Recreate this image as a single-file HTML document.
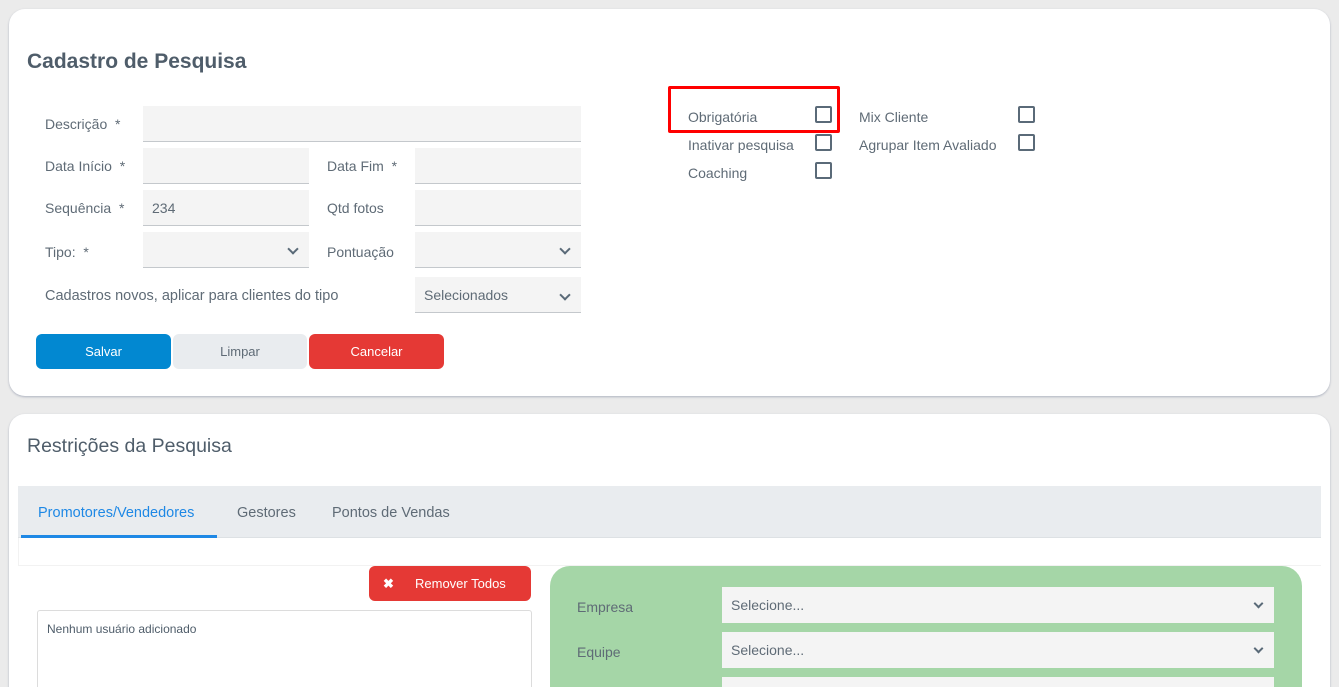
<!DOCTYPE html>
<html><head><meta charset="utf-8"><style>
*{box-sizing:border-box;margin:0;padding:0}
html{width:1339px;height:687px;overflow:hidden}
body{width:1339px;height:687px;overflow:hidden;background:#ebebeb;font-family:"Liberation Sans",sans-serif;color:#5f6b76;position:relative}
.a{position:absolute}
.card{position:absolute;background:#fff;border-radius:16px;box-shadow:0 1px 2px rgba(100,110,140,.45)}
.lbl{position:absolute;font-size:14px;color:#5f6b76}
.inp{position:absolute;background:#f4f4f4;border-bottom:1px solid #c4c8cc;height:36px}
.chev{position:absolute;width:8px;height:8px;border-right:2px solid #5a6a78;border-bottom:2px solid #5a6a78;transform:rotate(45deg)}
.cb{position:absolute;width:17px;height:17px;border:2px solid #5a6a78;border-radius:2px}
.btn{position:absolute;height:35px;border-radius:6px;font-size:13px;text-align:center;line-height:35px}
</style></head><body>
<div class="card" style="left:9px;top:9px;width:1321px;height:387px"></div>
<div class="a" style="left:27px;top:50px;font-size:21px;font-weight:bold;color:#4f5d6a">Cadastro de Pesquisa</div>

<div class="lbl" style="left:45px;top:116px">Descrição&nbsp;&nbsp;*</div>
<div class="inp" style="left:143px;top:106px;width:438px"></div>
<div class="lbl" style="left:45px;top:158px">Data Início&nbsp;&nbsp;*</div>
<div class="inp" style="left:143px;top:148px;width:166px"></div>
<div class="lbl" style="left:327px;top:158px">Data Fim&nbsp;&nbsp;*</div>
<div class="inp" style="left:415px;top:148px;width:166px"></div>
<div class="lbl" style="left:45px;top:200px">Sequência&nbsp;&nbsp;*</div>
<div class="inp" style="left:143px;top:190px;width:166px"><span style="position:absolute;left:9px;top:10px;font-size:14px">234</span></div>
<div class="lbl" style="left:327px;top:200px">Qtd fotos</div>
<div class="inp" style="left:415px;top:190px;width:166px"></div>
<div class="lbl" style="left:45px;top:244px">Tipo:&nbsp;&nbsp;*</div>
<div class="inp" style="left:143px;top:232px;width:166px"><div class="chev" style="left:146px;top:13px"></div></div>
<div class="lbl" style="left:327px;top:244px">Pontuação</div>
<div class="inp" style="left:415px;top:232px;width:166px"><div class="chev" style="left:146px;top:13px"></div></div>
<div class="lbl" style="left:45px;top:288px;font-size:14.5px">Cadastros novos, aplicar para clientes do tipo</div>
<div class="inp" style="left:415px;top:277px;width:166px"><span style="position:absolute;left:9px;top:10px;font-size:14px">Selecionados</span><div class="chev" style="left:146px;top:14px"></div></div>

<div class="btn" style="left:36px;top:334px;width:135px;background:#0288d1;color:#fff">Salvar</div>
<div class="btn" style="left:173px;top:334px;width:134px;background:#e9ecef;color:#5f6b76">Limpar</div>
<div class="btn" style="left:309px;top:334px;width:135px;background:#e53935;color:#fff">Cancelar</div>

<div class="a" style="left:668px;top:86px;width:172px;height:47px;border:3px solid #f00;border-radius:2px"></div>
<div class="lbl" style="left:688px;top:109px">Obrigatória</div>
<div class="cb" style="left:815px;top:106px"></div>
<div class="lbl" style="left:688px;top:137px">Inativar pesquisa</div>
<div class="cb" style="left:815px;top:134px"></div>
<div class="lbl" style="left:688px;top:165px">Coaching</div>
<div class="cb" style="left:815px;top:162px"></div>
<div class="lbl" style="left:859px;top:109px">Mix Cliente</div>
<div class="cb" style="left:1018px;top:106px"></div>
<div class="lbl" style="left:859px;top:137px">Agrupar Item Avaliado</div>
<div class="cb" style="left:1018px;top:134px"></div>

<div class="card" style="left:9px;top:414px;width:1321px;height:290px"></div>
<div class="a" style="left:27px;top:435px;font-size:19.5px;color:#4f5d6a">Restrições da Pesquisa</div>
<div class="a" style="left:18px;top:486px;width:1303px;height:52px;background:#e9ecef;border-bottom:1px solid #dde1e4"></div>
<div class="a" style="left:18px;top:538px;width:1303px;height:28px;border-left:1px solid #f2f2f2;border-bottom:1px solid #f2f2f2"></div>
<div class="a" style="left:38px;top:505px;font-size:14.5px;color:#1e88e5">Promotores/Vendedores</div>
<div class="a" style="left:21px;top:535px;width:196px;height:3px;background:#1e88e5"></div>
<div class="a" style="left:237px;top:505px;font-size:14.5px">Gestores</div>
<div class="a" style="left:332px;top:505px;font-size:14.5px">Pontos de Vendas</div>

<div class="btn" style="left:369px;top:566px;width:162px;background:#e53935;color:#fff;font-size:13px"><span style="position:absolute;left:14px;font-weight:bold">✖</span><span style="position:absolute;left:46px">Remover Todos</span></div>
<div class="a" style="left:37px;top:610px;width:495px;height:90px;border:1px solid #dcdcdc;border-radius:3px;background:#fff"><span style="position:absolute;left:9px;top:11px;font-size:12px;color:#4f5d6a">Nenhum usuário adicionado</span></div>

<div class="a" style="left:550px;top:566px;width:752px;height:140px;background:#a5d6a7;border-radius:20px 20px 0 0"></div>
<div class="lbl" style="left:577px;top:599px">Empresa</div>
<div class="lbl" style="left:577px;top:644px">Equipe</div>
<div class="inp" style="left:722px;top:587px;width:552px;border-bottom:none"><span style="position:absolute;left:9px;top:10px;font-size:14px">Selecione...</span><div class="chev" style="left:533px;top:13px;width:7px;height:7px"></div></div>
<div class="inp" style="left:722px;top:632px;width:552px;border-bottom:none"><span style="position:absolute;left:9px;top:10px;font-size:14px">Selecione...</span><div class="chev" style="left:533px;top:13px;width:7px;height:7px"></div></div>
<div class="inp" style="left:722px;top:677px;width:552px;border-bottom:none;height:10px"></div>
</body></html>
